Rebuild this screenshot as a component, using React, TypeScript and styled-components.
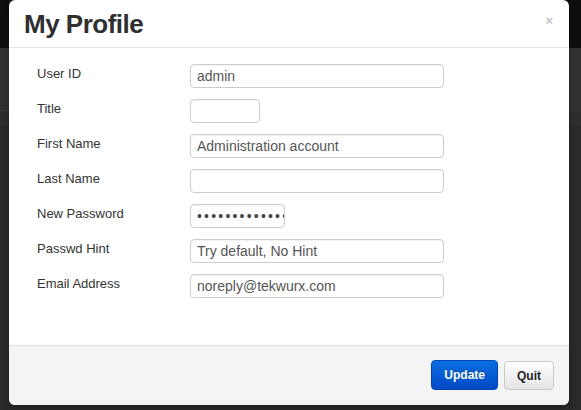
import React from "react";
import styled, { createGlobalStyle } from "styled-components";

const Global = createGlobalStyle`
  html, body { margin: 0; padding: 0; }
  body {
    width: 581px;
    height: 410px;
    overflow: hidden;
    background: #2a2a2a;
    font-family: "Liberation Sans", Arial, Helvetica, sans-serif;
  }
`;

const Page = styled.div`
  position: relative;
  width: 581px;
  height: 410px;
  display: flex;
  flex-direction: column;
  background: #2a2a2a;
`;

const TopBar = styled.div`
  height: 48px;
  background: #0e0e0e;
`;

const Band = styled.div`
  height: 62px;
  background: #323232;
  border-bottom: 1px solid #3a3a3a;
`;

const SubBand = styled.div`
  height: 14px;
  background: #2e2e2e;
`;

const Modal = styled.div`
  position: absolute;
  left: 9px;
  top: 0px;
  width: 560px;
  height: 405px;
  background: #fff;
  border-radius: 6px;
  display: flex;
  flex-direction: column;
  overflow: hidden;
  box-shadow: 0 3px 7px rgba(0, 0, 0, 0.3);
`;

const Header = styled.div`
  height: 48px;
  border-bottom: 1px solid #e5e5e5;
  display: flex;
  align-items: center;
  justify-content: space-between;
  padding: 0 16px 0 15px;
  box-sizing: border-box;
`;

const Title = styled.h3`
  margin: 0;
  margin-top: 1px;
  font-size: 26px;
  letter-spacing: -0.5px;
  font-weight: bold;
  color: #2f2f2f;
  line-height: 30px;
`;

const Close = styled.span`
  font-size: 13px;
  font-weight: bold;
  color: #c4c4c4;
  line-height: 14px;
  margin-top: -5px;
`;

const Body = styled.div`
  flex: 1;
  padding: 16px 0 0 28px;
  display: flex;
  flex-direction: column;
  gap: 11px;
`;

const Row = styled.div`
  display: flex;
  align-items: flex-start;
`;

const Label = styled.label`
  width: 153px;
  font-size: 13px;
  line-height: 20px;
  color: #333;
`;

const Input = styled.input<{ $w: number }>`
  box-sizing: border-box;
  width: ${(p) => p.$w}px;
  height: 24px;
  margin: 0;
  padding: 0 6px;
  border: 1px solid #cccccc;
  border-radius: 4px;
  font-family: "Liberation Sans", Arial, Helvetica, sans-serif;
  font-size: 14px;
  line-height: 22px;
  color: #555;
  background: #fff;
  box-shadow: inset 0 1px 1px rgba(0, 0, 0, 0.05);
  outline: none;
`;

const Secret = styled(Input)`
  padding: 0 0 0 6px;
  letter-spacing: 2.2px;
  color: #444;
`;

const Footer = styled.div`
  height: 60px;
  box-sizing: border-box;
  background: #f4f4f4;
  border-top: 1px solid #dcdcdc;
  display: flex;
  justify-content: flex-end;
  align-items: flex-start;
  gap: 6px;
  padding: 14px 15px 0 0;
`;

const Button = styled.button<{ $primary?: boolean }>`
  height: ${(p) => (p.$primary ? 30 : 29)}px;
  margin-top: ${(p) => (p.$primary ? 0 : 1)}px;
  padding: 0 12px;
  border-radius: 4px;
  font-family: "Liberation Sans", Arial, Helvetica, sans-serif;
  font-size: 12px;
  font-weight: bold;
  cursor: pointer;
  color: ${(p) => (p.$primary ? "#fff" : "#222")};
  border: 1px solid ${(p) => (p.$primary ? "#0046b8" : "#c8c8c8")};
  background: ${(p) =>
    p.$primary
      ? "linear-gradient(to bottom, #0a6fe0, #0049c6)"
      : "linear-gradient(to bottom, #ffffff, #e4e4e4)"};
  text-shadow: ${(p) => (p.$primary ? "0 -1px 0 rgba(0,0,0,0.25)" : "0 1px 0 rgba(255,255,255,0.75)")};
`;

const fields: { label: string; value: string; w: number; secret?: boolean }[] = [
  { label: "User ID", value: "admin", w: 254 },
  { label: "Title", value: "", w: 70 },
  { label: "First Name", value: "Administration account", w: 254 },
  { label: "Last Name", value: "", w: 254 },
  { label: "New Password", value: "administrator", w: 95, secret: true },
  { label: "Passwd Hint", value: "Try default, No Hint", w: 254 },
  { label: "Email Address", value: "noreply@tekwurx.com", w: 254 },
];

export default function App() {
  return (
    <>
      <Global />
      <Page>
        <TopBar />
        <Band />
        <SubBand />
        <Modal>
          <Header>
            <Title>My Profile</Title>
            <Close>×</Close>
          </Header>
          <Body>
            {fields.map((f) => (
              <Row key={f.label}>
                <Label>{f.label}</Label>
                {f.secret ? (
                  <Secret $w={f.w} type="password" defaultValue={f.value} />
                ) : (
                  <Input $w={f.w} type="text" defaultValue={f.value} />
                )}
              </Row>
            ))}
          </Body>
          <Footer>
            <Button $primary>Update</Button>
            <Button>Quit</Button>
          </Footer>
        </Modal>
      </Page>
    </>
  );
}
